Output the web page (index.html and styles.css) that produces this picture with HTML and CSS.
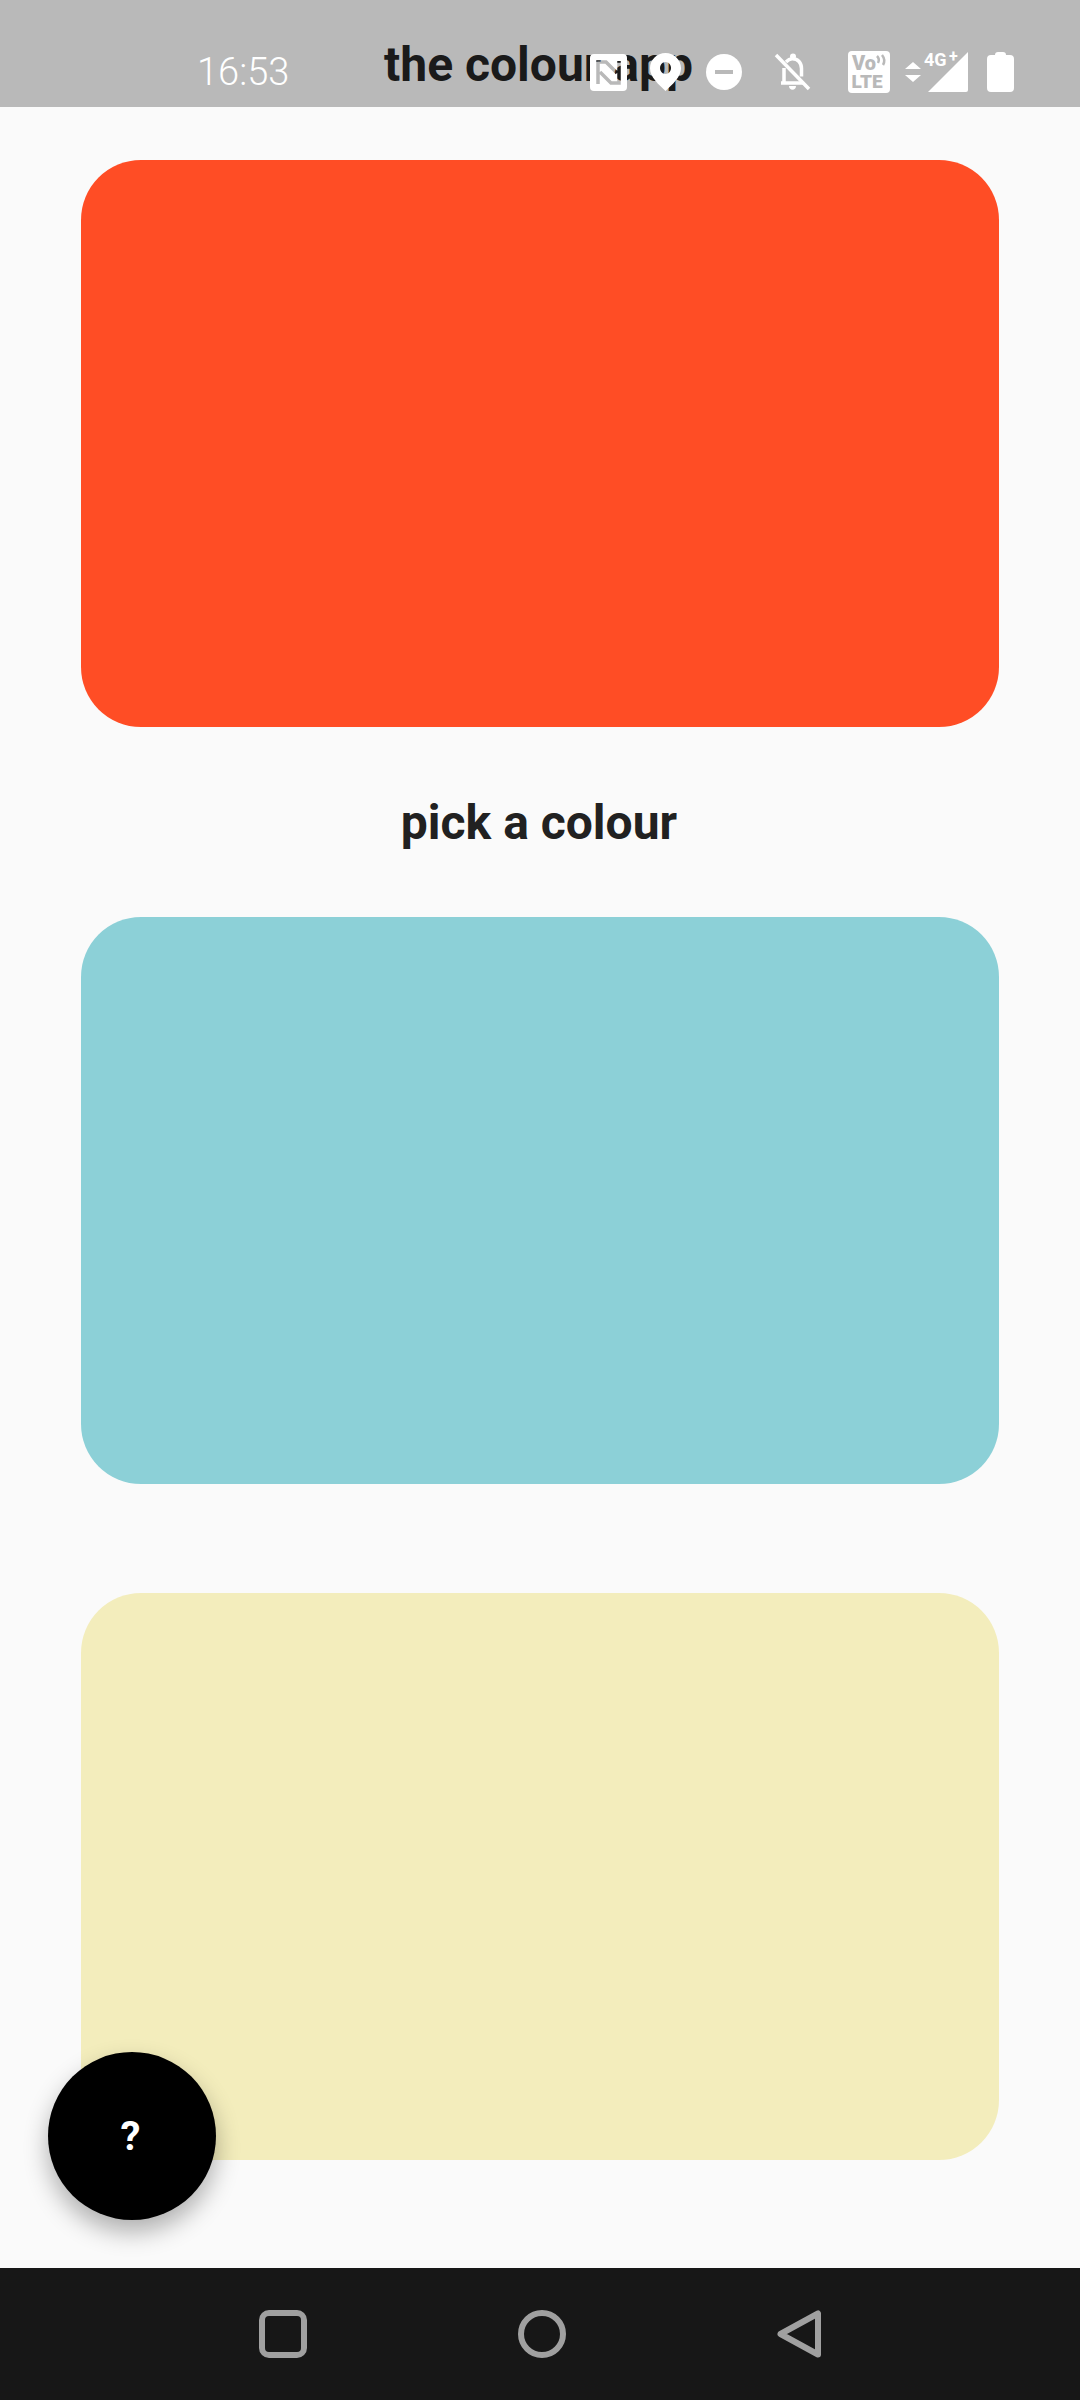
FILE: index.html
```html
<!DOCTYPE html>
<html lang="en">
  <head>
    <meta charset="UTF-8" />
    <meta name="viewport" content="width=device-width, initial-scale=1.0" />
    <title>the colour app</title>
    <link rel="stylesheet" href="styles.css">
  </head>

  <body>
    <div class="phone">
      <header class="appbar">
        <h1 class="appTitle">the colour app</h1>

        <div class="statusbar">
          <span class="time">16:53</span>
          <svg class="nfc" width="37" height="37" viewBox="0 0 37 37">
            <mask id="nfcCut">
              <rect width="37" height="37" fill="#fff" />
              <path d="M8 30V8h8l11 11M29 7v22h-8L10 18" fill="none" stroke="#000" stroke-width="3.500" />
            </mask>
            <rect width="37" height="37" rx="4" fill="#fff" mask="url(#nfcCut)" />
          </svg>
          <svg class="pin" width="31" height="38" viewBox="0 0 31 38">
            <path fill-rule="evenodd" d="M15.500 0C7 0 0 6.800 0 15.300 0 24 9 32 15.500 38 22 32 31 24 31 15.300 31 6.800 24 0 15.500 0ZM15.500 9a5.500 6 0 1 0 .01 0Z" fill="#fff" />
          </svg>
          <svg class="dnd" width="36" height="36" viewBox="0 0 36 36">
            <circle cx="18" cy="18" r="18" fill="#fff" />
            <rect x="9" y="16" width="18" height="4" fill="#b9b9b9" />
          </svg>
          <svg class="bell" width="37" height="38" viewBox="0 0 37 38">
            <path d="M12 9c1.500-1.500 3.500-3 6-3.200 6-.2 9.500 4.300 9.500 9.700v8M7 30h22M10 30v-15" fill="none" stroke="#fff" stroke-width="3.500" />
            <circle cx="19" cy="3.500" r="3" fill="#fff" />
            <path d="M15 33h7c0 5-7 5-7 0Z" fill="#fff" />
            <path d="M2 2l33 34" stroke="#fff" stroke-width="3.500" />
          </svg>
          <svg class="volte" width="42" height="42" viewBox="0 0 42 42">
            <rect width="42" height="42" rx="4" fill="#fff" />
            <text x="4" y="19" class="volteText">Vo</text>
            <text x="3.500" y="37" class="volteText lte">LTE</text>
            <path d="M29 5q3 3 1 7M34 4q4 5 1 10" fill="none" stroke="#b9b9b9" stroke-width="2.500" />
          </svg>
          <svg class="arrows" width="16" height="20" viewBox="0 0 16 20">
            <path d="M8 0l8 7H0ZM0 13h16l-8 7Z" fill="#fff" />
          </svg>
          <svg class="signal" width="44" height="48" viewBox="0 -8 44 48">
            <path d="M44 0v38q0 2-2 2H4Z" fill="#fff" />
            <text x="0" y="14" class="netText">4G</text>
            <text x="25" y="10" class="netText plus">+</text>
          </svg>
          <svg class="battery" width="27" height="40" viewBox="0 0 27 40">
            <path d="M8 3q0-3 3-3h5q3 0 3 3h4q4 0 4 4v29q0 4-4 4H4q-4 0-4-4V7q0-4 4-4Z" fill="#fff" />
          </svg>
        </div>
      </header>

      <main class="content">
        <div class="swatch swatchOrange"></div>
        <h2 class="pickLabel">pick a colour</h2>
        <div class="swatch swatchBlue"></div>
        <div class="swatch swatchYellow"></div>
        <button class="helpBtn">?</button>
      </main>

      <nav class="navbar">
        <svg width="48" height="48" viewBox="0 0 48 48">
          <rect x="3" y="3" width="42" height="42" rx="7" fill="none" stroke="#a0a0a0" stroke-width="6" />
        </svg>
        <svg width="48" height="48" viewBox="0 0 48 48">
          <circle cx="24" cy="24" r="21" fill="none" stroke="#a0a0a0" stroke-width="6" />
        </svg>
        <svg width="44" height="48" viewBox="0 0 44 48">
          <path d="M41 3.500V44.500L3.500 24Z" fill="none" stroke="#a0a0a0" stroke-width="6" stroke-linejoin="round" />
        </svg>
      </nav>
    </div>
  </body>
</html>
```

FILE: styles.css
```css
html,
body {
  margin: 0;
  padding: 0;
  font-family: Roboto, "Liberation Sans", sans-serif;
}

.phone {
  position: relative;
  width: 1080px;
  height: 2400px;
  display: flex;
  flex-direction: column;
  overflow: hidden;
  background-color: #fafafa;
}

/* top bar, the status icons sit over the title like in the screenshot */
.appbar {
  position: relative;
  height: 107px;
  background-color: #b9b9b9;
  flex-shrink: 0;
}

.appTitle {
  margin: 0;
  padding-top: 37px;
  padding-right: 3px;
  text-align: center;
  font-size: 48px;
  line-height: 56px;
  font-weight: 700;
  color: #1a1a1a;
}

.statusbar {
  position: absolute;
  top: 0;
  left: 0;
  right: 0;
  height: 107px;
  display: flex;
  align-items: center;
  padding-left: 197px;
  padding-top: 37px;
  box-sizing: border-box;
}

.time {
  width: 393px;
  font-size: 38px;
  font-weight: 300;
  color: #fff;
}

.statusbar svg {
  flex-shrink: 0;
}

.pin {
  margin-left: 23px;
}

.dnd {
  margin-left: 25px;
}

.bell {
  margin-left: 32px;
}

.volte {
  margin-left: 37px;
}

.arrows {
  margin-left: 15px;
}

/* taller than the triangle so the 4G+ label has room above it */
.signal {
  margin-left: 3px;
  margin-top: -8px;
}

.battery {
  margin-left: 19px;
}

.volteText {
  font-family: Roboto, sans-serif;
  font-size: 20px;
  font-weight: 900;
  fill: #b9b9b9;
}

.lte {
  font-size: 19px;
}

.netText {
  font-family: Roboto, sans-serif;
  font-size: 18px;
  font-weight: 700;
  fill: #fff;
  stroke: #b9b9b9;
  stroke-width: 1px;
  paint-order: stroke;
}

.plus {
  font-size: 16px;
}

.content {
  position: relative;
  flex: 1;
  padding: 53px 81px 0 81px;
}

.swatch {
  height: 567px;
  border-radius: 60px;
}

.swatchOrange {
  background-color: #ff4d25;
}

.swatchBlue {
  background-color: #8cd0d7;
  margin-bottom: 109px;
}

.swatchYellow {
  background-color: #f3edbc;
}

.pickLabel {
  margin: 0;
  height: 190px;
  line-height: 191px;
  padding-right: 2px;
  text-align: center;
  font-size: 48px;
  font-weight: 700;
  color: #212121;
}

.helpBtn {
  position: absolute;
  left: 48px;
  top: 1945px;
  width: 168px;
  height: 168px;
  padding: 0 3px 0 0;
  border: none;
  border-radius: 50%;
  background-color: #000;
  color: #fff;
  font-family: Roboto, sans-serif;
  font-size: 40px;
  font-weight: 700;
  box-shadow: 0 12px 24px rgba(0, 0, 0, 0.3);
}

.navbar {
  height: 132px;
  flex-shrink: 0;
  background-color: #171717;
  display: flex;
  justify-content: center;
  align-items: center;
  gap: 211px;
}
```
